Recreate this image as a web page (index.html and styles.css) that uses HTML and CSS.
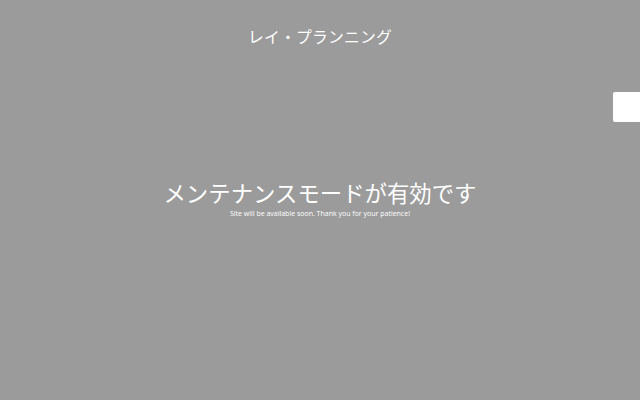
FILE: index.html
```html
<!DOCTYPE html>
<html lang="ja">
<head>
<meta charset="utf-8">
<link rel="stylesheet" href="styles.css">
</head>
<body>
<div class="page">
  <header class="top">
    <div class="brand">レイ・プランニング</div>
  </header>
  <main class="main">
    <h1 class="title">メンテナンスモードが有効です</h1>
    <p class="sub">Site will be available soon. Thank you for your patience!</p>
  </main>
  <div class="tab"></div>
</div>
</body>
</html>
```
FILE: styles.css
```css
html, body {
  margin: 0;
  padding: 0;
  background: #9b9b9b;
  height: 100%;
}
.page {
  position: relative;
  width: 640px;
  height: 400px;
  overflow: hidden;
  font-family: "Open Sans", "Noto Sans CJK JP", sans-serif;
  color: #ffffff;
}
.top {
  display: flex;
  justify-content: center;
  padding-top: 26px;
}
.brand {
  font-size: 15.8px;
  line-height: 22px;
  letter-spacing: 0.2px;
}
.main {
  display: flex;
  flex-direction: column;
  align-items: center;
  padding-top: 132px;
}
.title {
  margin: 0;
  font-weight: 400;
  font-size: 22.4px;
  line-height: 28px;
}
.sub {
  margin: 1px 0 0;
  font-size: 7px;
  line-height: 10px;
}
.tab {
  position: absolute;
  right: 0;
  top: 92px;
  width: 27px;
  height: 30px;
  background: #ffffff;
  border-radius: 2px 0 0 2px;
}
```
